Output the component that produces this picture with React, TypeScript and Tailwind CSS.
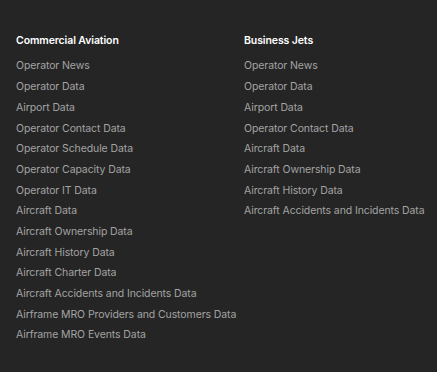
const commercial = [
  "Operator News",
  "Operator Data",
  "Airport Data",
  "Operator Contact Data",
  "Operator Schedule Data",
  "Operator Capacity Data",
  "Operator IT Data",
  "Aircraft Data",
  "Aircraft Ownership Data",
  "Aircraft History Data",
  "Aircraft Charter Data",
  "Aircraft Accidents and Incidents Data",
  "Airframe MRO Providers and Customers Data",
  "Airframe MRO Events Data",
];

const jets = [
  "Operator News",
  "Operator Data",
  "Airport Data",
  "Operator Contact Data",
  "Aircraft Data",
  "Aircraft Ownership Data",
  "Aircraft History Data",
  "Aircraft Accidents and Incidents Data",
];

function LinkColumn({ title, links, className }: { title: string; links: string[]; className?: string }) {
  return (
    <div className={className}>
      <h4 className="text-[10.5px] font-semibold text-white leading-[14px] tracking-[-0.1px]">{title}</h4>
      <ul className="mt-[8px]">
        {links.map((l) => (
          <li key={l} className="h-[20.7px] flex items-center whitespace-nowrap">
            <a href="#" className="text-[10.5px] text-[#a3a3a3] tracking-[-0.1px]">{l}</a>
          </li>
        ))}
      </ul>
    </div>
  );
}

export default function App() {
  return (
    <div className="w-[437px] h-[372px] bg-[#252525] pl-[16px] pt-[34px] flex font-['Inter',sans-serif]">
      <LinkColumn title="Commercial Aviation" links={commercial} className="w-[228px] shrink-0" />
      <LinkColumn title="Business Jets" links={jets} className="flex-1 min-w-0" />
    </div>
  );
}
